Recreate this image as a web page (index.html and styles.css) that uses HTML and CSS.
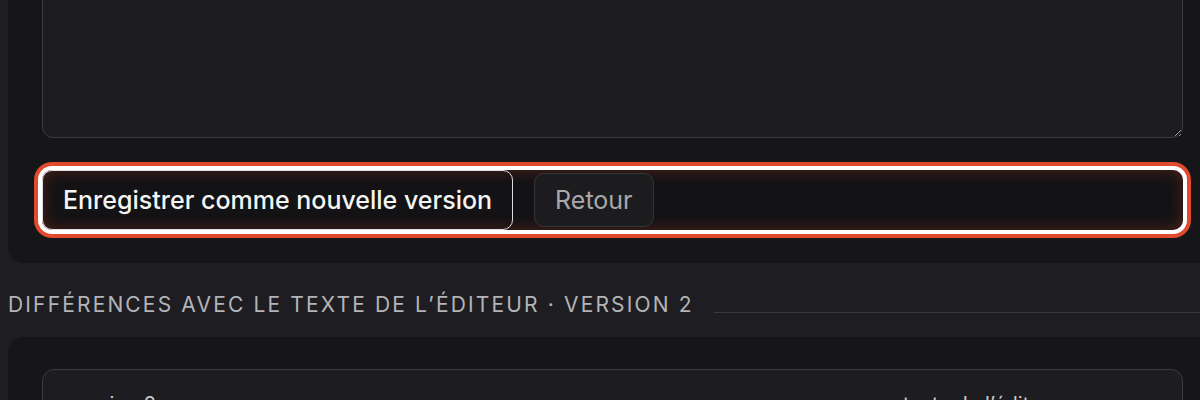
FILE: index.html
```html
<!DOCTYPE html>
<html lang="fr">
<head>
<meta charset="utf-8">
<title>Éditeur</title>
<link rel="stylesheet" href="styles.css">
</head>
<body>
<div class="page">
  <section class="card editor-card">
    <textarea class="editor" aria-label="Texte"></textarea>
    <div class="actions">
      <button class="btn btn-primary" type="button">Enregistrer comme nouvelle version</button>
      <button class="btn btn-secondary" type="button">Retour</button>
    </div>
  </section>
  <h2 class="section-title">Différences avec le texte de l’éditeur · version 2</h2>
  <section class="card diff-card">
    <div class="diff-box">
      <div class="diff-head">
        <span class="diff-label">version 2</span>
        <span class="diff-label diff-label-right">texte de l’éditeur</span>
      </div>
    </div>
  </section>
</div>
</body>
</html>
```
FILE: styles.css
```css
html, body {
  overflow: hidden;
}
body {
  margin: 0;
  padding-left: 8px;
  background: #1e1e22;
  font-family: Inter, "Noto Sans", "Liberation Sans", sans-serif;
  color: #e8e8ea;
  color-scheme: dark;
}
.page {
  width: 1209px;
  margin-top: -100px;
}
.card {
  background: #161618;
  border-radius: 16px;
  padding: 34px 34px 33px;
}
.editor-card {
  display: flex;
  flex-direction: column;
  gap: 32px;
}
.editor {
  display: block;
  box-sizing: border-box;
  width: 100%;
  height: 204px;
  margin: 0;
  background: #1d1d21;
  border: 1px solid #3a3a3f;
  border-radius: 11px;
  color: #e8e8ea;
  font: inherit;
  resize: both;
  outline: none;
}
.actions {
  display: flex;
  align-items: center;
  gap: 21px;
  height: 60px;
  background: #131214;
  border-radius: 10px;
  box-shadow: 0 0 0 4px #ffffff, 0 0 0 8px #e04a2e, inset 0 0 16px rgba(210, 70, 45, 0.32);
}
.btn {
  font-family: inherit;
  font-size: 25px;
  line-height: 30px;
  border-radius: 10px;
  cursor: pointer;
  margin: 0;
}
.btn-primary {
  height: 60px;
  padding: 0 20px;
  background: transparent;
  border: 1px solid #dcdcde;
  color: #f4f4f5;
  font-weight: 500;
}
.btn-secondary {
  height: 54px;
  padding: 0 20px;
  background: #1c1b1e;
  border: 1px solid #343437;
  color: #a9a9ad;
  font-weight: 400;
}
.section-title {
  display: flex;
  align-items: flex-end;
  gap: 20px;
  margin: 30px 0 20px;
  font-size: 21px;
  line-height: 24px;
  font-weight: 400;
  letter-spacing: 2.15px;
  text-transform: uppercase;
  color: #b4b4b8;
  white-space: nowrap;
}
.section-title::after {
  content: "";
  flex: 1;
  height: 1px;
  margin-bottom: 4px;
  background: #3a3a3f;
}
.diff-card {
  padding: 32px 34px;
}
.diff-box {
  background: #1d1d21;
  border: 1px solid #3a3a3f;
  border-radius: 12px;
  padding: 22px 26px;
  height: 200px;
}
.diff-head {
  display: flex;
  font-size: 20px;
  line-height: 24px;
  color: #c8c8cc;
}
.diff-label-right {
  margin-left: auto;
  margin-right: 96px;
}
```
